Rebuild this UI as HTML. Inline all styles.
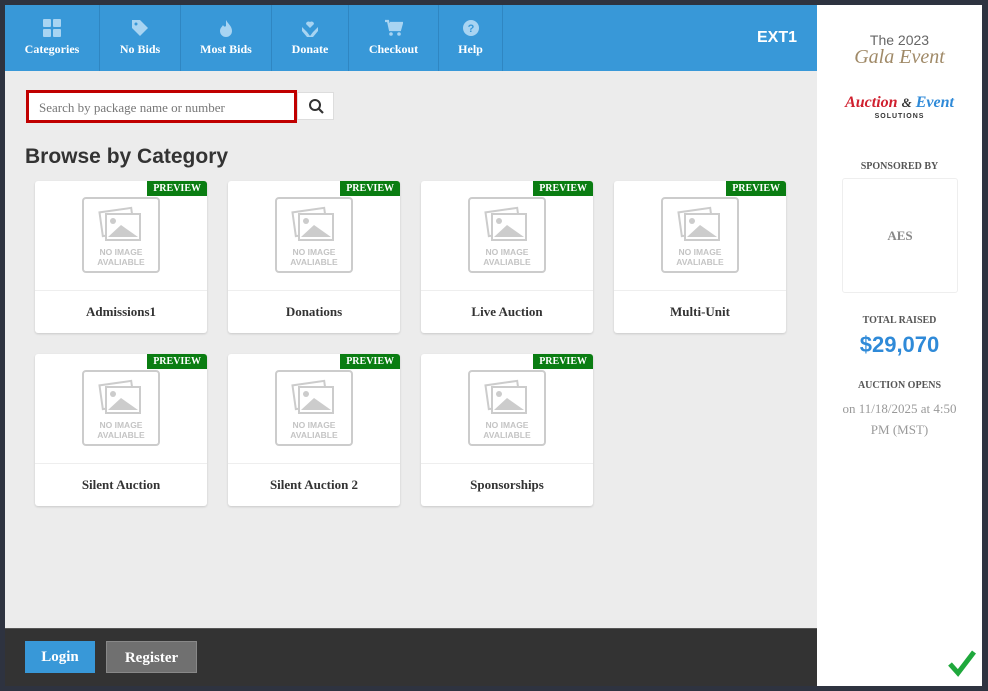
<!DOCTYPE html>
<html><head><meta charset="utf-8"><style>
*{box-sizing:border-box;margin:0;padding:0}
body{width:988px;height:691px;background:#2e3340;position:relative;overflow:hidden;font-family:"Liberation Serif",serif}
.main{position:absolute;left:5px;top:5px;width:812px;height:681px;background:#ececec}
.hdr{position:absolute;left:0;top:0;width:812px;height:66px;background:#3898d8}
.nav{position:absolute;top:0;height:66px;border-right:1px solid #2f86c2;color:#fff;font-weight:bold;font-size:12px;text-align:center}
.nav span{position:absolute;left:0;right:0;top:37px}
.nav svg{position:absolute;top:14px;left:50%;margin-left:-9px}
.ext{position:absolute;right:20px;top:24px;color:#fff;font:bold 16px "Liberation Sans",sans-serif}
.search{position:absolute;left:21px;top:85px;width:271px;height:33px;border:3px solid #c00000;background:#fff;color:#777;font-size:13px;padding:7px 10px}
.sbtn{position:absolute;left:292px;top:87px;width:37px;height:28px;background:#fff;border:1px solid #ddd}
h2{position:absolute;left:20px;top:140px;font:bold 21px "Liberation Sans",sans-serif;color:#333}
.card{position:absolute;width:172px;height:152px;background:#fff;border-radius:3px;box-shadow:0 1px 2px rgba(0,0,0,.15)}
.card .pv{position:absolute;right:0;top:0;background:#0a7d12;color:#fff;font-size:10px;font-weight:bold;padding:2px 6px;border-radius:0 3px 0 0}
.card .img{position:absolute;left:47px;top:16px;width:78px;height:76px;border:2px solid #ccc;border-radius:4px;text-align:center}
.card .img b{position:absolute;left:0;right:0;top:48px;font:bold 8.5px/10px "Liberation Sans",sans-serif;color:#c4c4c4}
.card .ln{position:absolute;left:0;right:0;top:109px;border-top:1px solid #eee}
.card .t{position:absolute;left:0;right:0;top:123px;text-align:center;font-weight:bold;font-size:13px;color:#333}
.side{position:absolute;left:817px;top:5px;width:165px;height:681px;background:#fff}
.foot{position:absolute;left:5px;top:628px;width:812px;height:58px;background:#333;border-top:1px solid #555}
.btn{position:absolute;top:12px;height:32px;color:#fff;font-weight:bold;font-size:15px;text-align:center;line-height:32px}
.c{text-align:center;position:absolute;left:0;right:0}
</style></head><body>
<div class="main">
<div class="hdr">
<div class="nav" style="left:0;width:95px"><svg width="18" height="18"><rect x="0" y="0" width="8" height="8" rx="1" fill="#a8d4f2"/><rect x="10" y="0" width="8" height="8" rx="1" fill="#a8d4f2"/><rect x="0" y="10" width="8" height="8" rx="1" fill="#a8d4f2"/><rect x="10" y="10" width="8" height="8" rx="1" fill="#a8d4f2"/></svg><span>Categories</span></div>
<div class="nav" style="left:95px;width:81px"><svg width="18" height="18"><path d="M1 1h8l8 8-8 8-8-8z" fill="#a8d4f2"/><circle cx="5" cy="5" r="1.5" fill="#3898d8"/></svg><span>No Bids</span></div>
<div class="nav" style="left:176px;width:91px"><svg width="18" height="18"><path d="M9 1c2 4 6 6 6 11a6 6 0 0 1-12 0c0-3 2-4 3-6 1 2 2 2 3 1z" fill="#a8d4f2"/></svg><span>Most Bids</span></div>
<div class="nav" style="left:267px;width:77px"><svg width="18" height="18"><path d="M9 9l-4-4a2.5 2.5 0 0 1 4-2 2.5 2.5 0 0 1 4 2z M1 8l5 5 3 4 3-4 5-5v4l-5 6H6l-5-6z" fill="#a8d4f2"/></svg><span>Donate</span></div>
<div class="nav" style="left:344px;width:90px"><svg width="18" height="18"><path d="M0 2h3l2 9h10l2-7H5" stroke="#a8d4f2" stroke-width="2.2" fill="#a8d4f2"/><circle cx="6" cy="15" r="1.8" fill="#a8d4f2"/><circle cx="14" cy="15" r="1.8" fill="#a8d4f2"/></svg><span>Checkout</span></div>
<div class="nav" style="left:434px;width:64px"><svg width="18" height="18"><circle cx="9" cy="9" r="8" fill="#a8d4f2"/><text x="9" y="13" fill="#3898d8" font-size="11" font-weight="bold" text-anchor="middle" font-family="Liberation Sans">?</text></svg><span>Help</span></div>
<div class="ext">EXT1</div>
</div>
<div class="search">Search by package name or number</div>
<div class="sbtn"><svg width="37" height="28"><circle cx="17" cy="12" r="5" stroke="#333" stroke-width="2" fill="none"/><path d="M21 16l4 4" stroke="#333" stroke-width="2.2"/></svg></div>
<h2>Browse by Category</h2>
</div>
<div class="side">
<div class="c" style="top:27px;font:14px 'Liberation Sans',sans-serif;color:#666">The 2023</div>
<div class="c" style="top:41px;font:italic 20px 'Liberation Serif',serif;color:#a08a68">Gala Event</div>
<div class="c" style="top:89px;font:italic bold 16px 'Liberation Serif',serif;color:#d0202f">Auction <span style="color:#333;font-size:13px">&amp;</span> <span style="color:#2f8ad8">Event</span></div>
<div class="c" style="top:108px;font:bold 7px 'Liberation Sans',sans-serif;color:#333;letter-spacing:1px">SOLUTIONS</div>
<div class="c" style="top:156px;font-weight:bold;font-size:10px;color:#555">SPONSORED BY</div>
<div style="position:absolute;left:25px;top:173px;width:116px;height:115px;border:1px solid #eee;border-radius:3px;text-align:center;line-height:113px;font-weight:bold;font-size:13px;color:#888">AES</div>
<div class="c" style="top:310px;font-weight:bold;font-size:10px;color:#555">TOTAL RAISED</div>
<div class="c" style="top:327px;font:bold 22px 'Liberation Sans',sans-serif;color:#2f8ad8">$29,070</div>
<div class="c" style="top:375px;font-weight:bold;font-size:10px;color:#555">AUCTION OPENS</div>
<div class="c" style="top:393px;font-size:13px;line-height:21px;color:#999">on 11/18/2025 at 4:50<br>PM (MST)</div>
<svg style="position:absolute;left:130px;top:644px" width="30" height="28"><path d="M3 15l8 9L27 3" stroke="#1fa83c" stroke-width="5" fill="none"/></svg>
</div>
<div class="foot">
<div class="btn" style="left:20px;width:70px;background:#3898d8">Login</div>
<div class="btn" style="left:101px;width:91px;background:#707070;border:1px solid #888">Register</div>
</div>
<div class="card" style="left:35px;top:181px"><div class="img"><svg width="74" height="48"><rect x="17" y="11" width="32" height="24" fill="none" stroke="#ccc" stroke-width="2" transform="rotate(-8 33 23)"/><rect x="22" y="15" width="34" height="26" fill="#fff" stroke="#ccc" stroke-width="2"/><circle cx="29" cy="22" r="3" fill="#ccc"/><path d="M24 38l13-12 17 12z" fill="#ccc"/></svg><b>NO IMAGE<br>AVALIABLE</b></div><div class="pv">PREVIEW</div><div class="ln"></div><div class="t">Admissions1</div></div>
<div class="card" style="left:228px;top:181px"><div class="img"><svg width="74" height="48"><rect x="17" y="11" width="32" height="24" fill="none" stroke="#ccc" stroke-width="2" transform="rotate(-8 33 23)"/><rect x="22" y="15" width="34" height="26" fill="#fff" stroke="#ccc" stroke-width="2"/><circle cx="29" cy="22" r="3" fill="#ccc"/><path d="M24 38l13-12 17 12z" fill="#ccc"/></svg><b>NO IMAGE<br>AVALIABLE</b></div><div class="pv">PREVIEW</div><div class="ln"></div><div class="t">Donations</div></div>
<div class="card" style="left:421px;top:181px"><div class="img"><svg width="74" height="48"><rect x="17" y="11" width="32" height="24" fill="none" stroke="#ccc" stroke-width="2" transform="rotate(-8 33 23)"/><rect x="22" y="15" width="34" height="26" fill="#fff" stroke="#ccc" stroke-width="2"/><circle cx="29" cy="22" r="3" fill="#ccc"/><path d="M24 38l13-12 17 12z" fill="#ccc"/></svg><b>NO IMAGE<br>AVALIABLE</b></div><div class="pv">PREVIEW</div><div class="ln"></div><div class="t">Live Auction</div></div>
<div class="card" style="left:614px;top:181px"><div class="img"><svg width="74" height="48"><rect x="17" y="11" width="32" height="24" fill="none" stroke="#ccc" stroke-width="2" transform="rotate(-8 33 23)"/><rect x="22" y="15" width="34" height="26" fill="#fff" stroke="#ccc" stroke-width="2"/><circle cx="29" cy="22" r="3" fill="#ccc"/><path d="M24 38l13-12 17 12z" fill="#ccc"/></svg><b>NO IMAGE<br>AVALIABLE</b></div><div class="pv">PREVIEW</div><div class="ln"></div><div class="t">Multi-Unit</div></div>
<div class="card" style="left:35px;top:354px"><div class="img"><svg width="74" height="48"><rect x="17" y="11" width="32" height="24" fill="none" stroke="#ccc" stroke-width="2" transform="rotate(-8 33 23)"/><rect x="22" y="15" width="34" height="26" fill="#fff" stroke="#ccc" stroke-width="2"/><circle cx="29" cy="22" r="3" fill="#ccc"/><path d="M24 38l13-12 17 12z" fill="#ccc"/></svg><b>NO IMAGE<br>AVALIABLE</b></div><div class="pv">PREVIEW</div><div class="ln"></div><div class="t">Silent Auction</div></div>
<div class="card" style="left:228px;top:354px"><div class="img"><svg width="74" height="48"><rect x="17" y="11" width="32" height="24" fill="none" stroke="#ccc" stroke-width="2" transform="rotate(-8 33 23)"/><rect x="22" y="15" width="34" height="26" fill="#fff" stroke="#ccc" stroke-width="2"/><circle cx="29" cy="22" r="3" fill="#ccc"/><path d="M24 38l13-12 17 12z" fill="#ccc"/></svg><b>NO IMAGE<br>AVALIABLE</b></div><div class="pv">PREVIEW</div><div class="ln"></div><div class="t">Silent Auction 2</div></div>
<div class="card" style="left:421px;top:354px"><div class="img"><svg width="74" height="48"><rect x="17" y="11" width="32" height="24" fill="none" stroke="#ccc" stroke-width="2" transform="rotate(-8 33 23)"/><rect x="22" y="15" width="34" height="26" fill="#fff" stroke="#ccc" stroke-width="2"/><circle cx="29" cy="22" r="3" fill="#ccc"/><path d="M24 38l13-12 17 12z" fill="#ccc"/></svg><b>NO IMAGE<br>AVALIABLE</b></div><div class="pv">PREVIEW</div><div class="ln"></div><div class="t">Sponsorships</div></div>
</body></html>
